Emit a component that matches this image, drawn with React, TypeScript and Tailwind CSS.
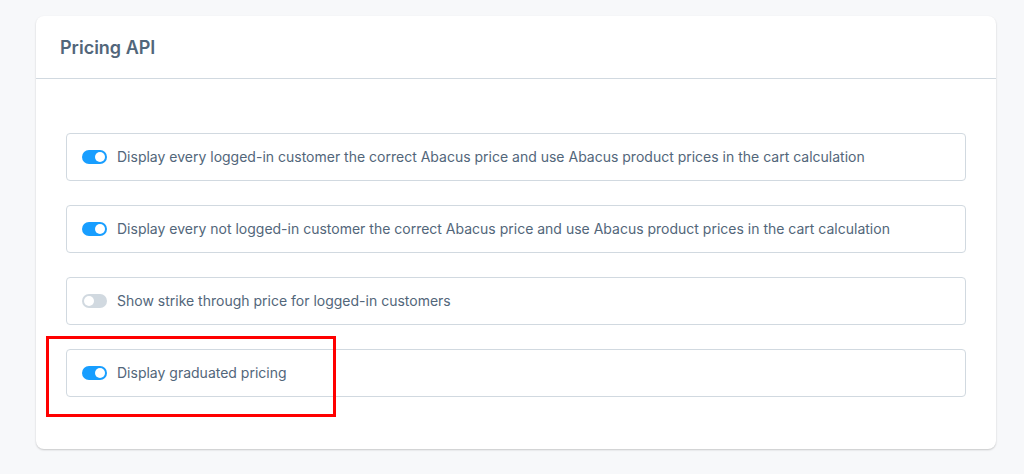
import React from 'react';

const rows = [
  { label: 'Display every logged-in customer the correct Abacus price and use Abacus product prices in the cart calculation', on: true },
  { label: 'Display every not logged-in customer the correct Abacus price and use Abacus product prices in the cart calculation', on: true },
  { label: 'Show strike through price for logged-in customers', on: false },
  { label: 'Display graduated pricing', on: true },
];

function Toggle({ on }: { on: boolean }) {
  return (
    <span
      className={`relative inline-flex h-[14px] w-[25px] shrink-0 items-center rounded-full ${on ? 'bg-[#189eff]' : 'bg-[#d1d9e0]'}`}
    >
      <span className={`absolute h-[10px] w-[10px] rounded-full bg-white ${on ? 'left-[13px]' : 'left-[2px]'}`} />
    </span>
  );
}

export default function App() {
  return (
    <div className="relative min-h-[474px] bg-[#f7f8fa] pl-9 pr-7 pt-4 pb-6 font-['Inter',sans-serif]">
      <div className="rounded-lg bg-white shadow-[0_1px_2px_rgba(0,0,0,0.2)]">
        <div className="flex h-[63px] items-center border-b border-[#d1d9e0] px-6 pt-[2px]">
          <h1 className="text-lg font-semibold text-[#52667a]">Pricing API</h1>
        </div>
        <div className="flex flex-col gap-6 px-[30px] pt-[54px] pb-[52px]">
          {rows.map((r) => (
            <div
              key={r.label}
              className="flex h-12 items-center gap-[10px] rounded border border-[#d1d9e0] px-[15px]"
            >
              <Toggle on={r.on} />
              <span className="text-sm text-[#52667a]">{r.label}</span>
            </div>
          ))}
        </div>
      </div>
      <div className="pointer-events-none absolute left-[46px] top-[336px] h-[81px] w-[290px] border-[3px] border-[#ff0000]" />
    </div>
  );
}
